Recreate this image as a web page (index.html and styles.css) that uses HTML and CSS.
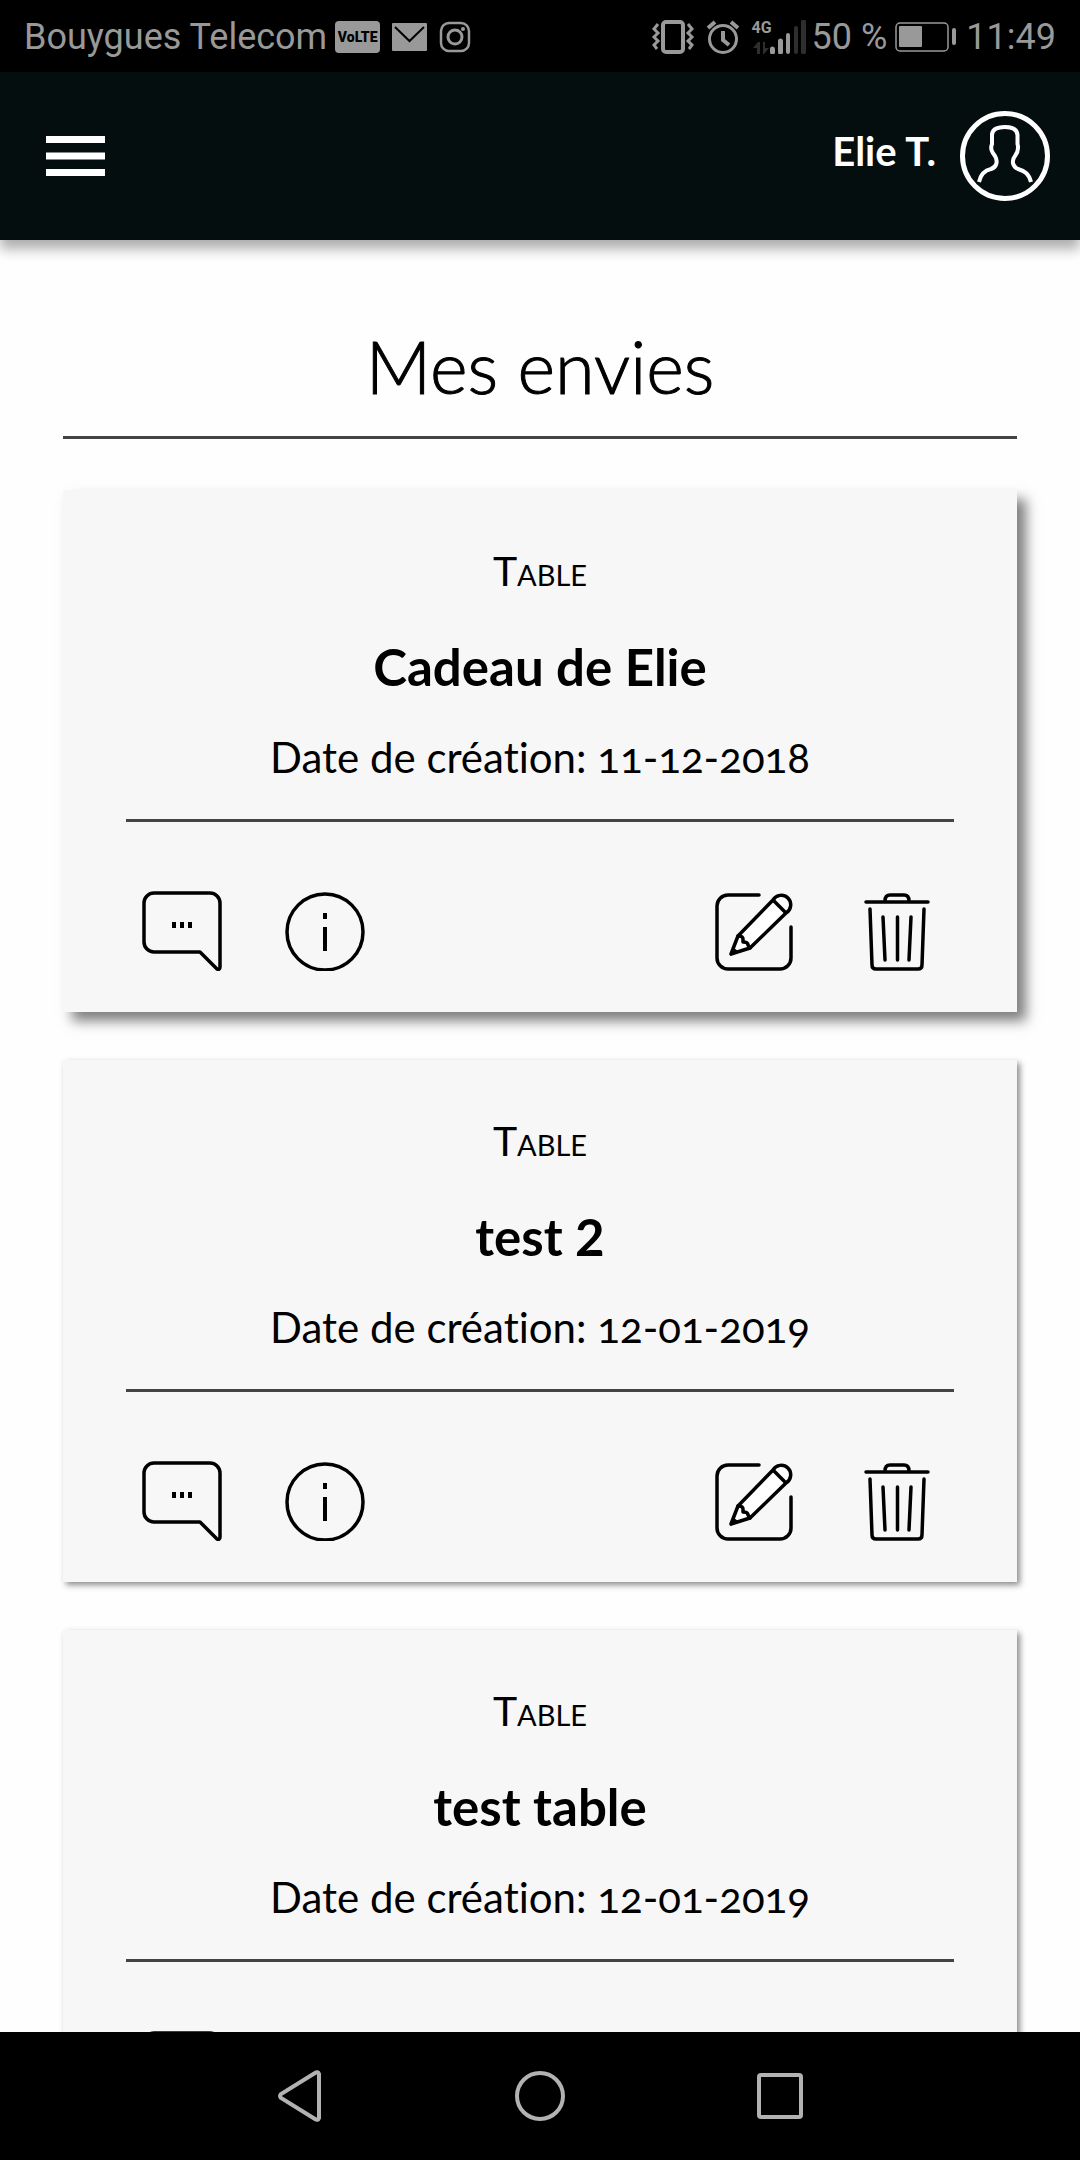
FILE: index.html
```html
<!DOCTYPE html>
<html lang="fr">
<head>
<meta charset="utf-8">
<meta name="viewport" content="width=device-width, initial-scale=1">
<title>Mes envies</title>
<link rel="stylesheet" href="styles.css">
</head>
<body>
<svg class="defs" width="0" height="0" aria-hidden="true">
  <symbol id="chat" viewBox="0 0 80 80">
    <path class="line" d="M12 2H68a10 10 0 0 1 10 10V76q0 3-3 2L58 61H12A10 10 0 0 1 2 51V12A10 10 0 0 1 12 2Z"/>
    <path d="M30 31h4v6h-4zM38 31h4v6h-4zM46 31h4v6h-4z"/>
  </symbol>
  <symbol id="info" viewBox="0 0 80 80">
    <circle class="line" cx="40" cy="41" r="38"/>
    <path d="M38 22h4v6h-4zM38 36h4v24h-4z"/>
  </symbol>
  <symbol id="edit" viewBox="0 0 80 80">
    <path class="line" d="M45 4H14A11 11 0 0 0 3 15V67A11 11 0 0 0 14 78H66A11 11 0 0 0 77 67V36"/>
    <path class="line pencil" d="M59 9 24 45 17 63 36 57 72 22A9.5 9.5 0 1 0 59 9L72 22"/>
    <path class="line" d="M24 45q5 0 5 3v3q5 0 5 3l2 3"/>
    <path d="M19 56l6 5-9 4z"/>
  </symbol>
  <symbol id="trash" viewBox="0 0 80 80">
    <path class="line" d="M9 11H71M28 10q0-6 5-6H47q5 0 5 6M13 18 15 74q0 4 4 4H61q4 0 4-4L67 18M26 26 28 69M40.500 26V69M54 26 52 69"/>
  </symbol>
</svg>

<div class="screen">
  <div class="status">
    <div class="status-group">
      <span>Bouygues Telecom</span>
      <span class="volte">VoLTE</span>
      <svg class="mail" viewBox="0 0 35 28" width="35" height="28"><rect width="35" height="28" rx="1" fill="#999"/><path d="M3 4 17.500 18 32 4" fill="none" stroke="#000" stroke-width="2"/></svg>
      <svg class="insta" viewBox="0 0 32 32" width="32" height="32" fill="none" stroke="#999"><rect x="2" y="2" width="28" height="28" rx="8" stroke-width="2.500"/><circle cx="16" cy="16" r="7" stroke-width="3"/><circle cx="24" cy="8" r="2" fill="#999" stroke="none"/></svg>
    </div>
    <div class="status-group">
      <svg class="vibrate" viewBox="0 0 44 34" width="44" height="34" fill="none" stroke="#999" stroke-width="3"><rect x="12" y="2" width="20" height="30" rx="3" stroke-width="4"/><path d="M7 4 3 9l4 4-4 4 4 4-4 4 3 4M37 4l4 5-4 4 4 4-4 4 4 4-3 4"/></svg>
      <svg class="alarm" viewBox="0 0 34 34" width="34" height="34" fill="none" stroke="#999" stroke-width="3"><circle cx="17" cy="19" r="13.500"/><path d="M17 11v9l6 5" stroke-width="4"/><path d="M2 8 9 2M32 8 25 2" stroke-width="4"/></svg>
      <div class="signal">
        <span class="network">4G</span>
        <svg viewBox="0 0 54 34" width="54" height="34"><path fill="#2e2e2e" d="M1 28l5-6h2v12H5v-6zM11 22h2v6h4l-5 6h-1zM42 8a2 2 0 0 1 4 0V32a2 2 0 0 1-4 0zM49 2a2 2 0 0 1 5 0V32a2 2 0 0 1-5 0z"/><path fill="#999" d="M18 29a2 2 0 0 1 5 0v3a2 2 0 0 1-5 0zM26 21a2 2 0 0 1 5 0V32a2 2 0 0 1-5 0zM34 15a2 2 0 0 1 4 0V32a2 2 0 0 1-4 0z"/></svg>
      </div>
      <span>50 %</span>
      <svg class="battery" viewBox="0 0 62 30" width="62" height="30"><rect x="1" y="1" width="52" height="28" rx="4" fill="none" stroke="#999" stroke-width="1.500"/><rect x="4" y="4" width="23" height="21" rx="1" fill="#999"/><rect x="57" y="6" width="4" height="17" rx="2" fill="#999"/></svg>
      <span>11:49</span>
    </div>
  </div>

  <header class="topbar">
    <button class="icon-button menu" aria-label="Menu"><svg viewBox="0 0 60 40" width="60" height="40" fill="#fff"><path d="M0 0H59V7H0zM0 16.500H59V23.500H0zM0 33H59V40H0z"/></svg></button>
    <a class="user" href="#profil">
      <span class="user-name">Elie T.</span>
      <svg viewBox="0 0 90 90" width="90" height="90" fill="none" stroke="#fff" stroke-width="4"><circle cx="45" cy="45" r="42.500" stroke-width="5"/><path d="M19 71C21 62 26 59 31 58 37 56 38 50 35 45 32 41 30 38 32 33V24C32 18 38 16 45 16S57 18 57.500 24V33C59 38 58 41 55 45 51 50 53 56 58 58 65 60 69 63 71 71"/></svg>
    </a>
  </header>

  <main class="content">
    <h1 class="page-title">Mes envies</h1>

    <article class="card raised">
      <p class="kind">Table</p>
      <h2 class="name">Cadeau de Elie</h2>
      <p class="date">Date de création: 11-12-2018</p>
      <div class="actions">
        <button class="icon-button" aria-label="Commentaires"><svg class="icon"><use href="#chat"/></svg></button>
        <button class="icon-button" aria-label="Informations"><svg class="icon"><use href="#info"/></svg></button>
        <button class="icon-button push" aria-label="Modifier"><svg class="icon"><use href="#edit"/></svg></button>
        <button class="icon-button" aria-label="Supprimer"><svg class="icon"><use href="#trash"/></svg></button>
      </div>
    </article>

    <article class="card">
      <p class="kind">Table</p>
      <h2 class="name">test 2</h2>
      <p class="date">Date de création: 12-01-2019</p>
      <div class="actions">
        <button class="icon-button" aria-label="Commentaires"><svg class="icon"><use href="#chat"/></svg></button>
        <button class="icon-button" aria-label="Informations"><svg class="icon"><use href="#info"/></svg></button>
        <button class="icon-button push" aria-label="Modifier"><svg class="icon"><use href="#edit"/></svg></button>
        <button class="icon-button" aria-label="Supprimer"><svg class="icon"><use href="#trash"/></svg></button>
      </div>
    </article>

    <article class="card">
      <p class="kind">Table</p>
      <h2 class="name">test table</h2>
      <p class="date">Date de création: 12-01-2019</p>
      <div class="actions">
        <button class="icon-button" aria-label="Commentaires"><svg class="icon"><use href="#chat"/></svg></button>
        <button class="icon-button" aria-label="Informations"><svg class="icon"><use href="#info"/></svg></button>
        <button class="icon-button push" aria-label="Modifier"><svg class="icon"><use href="#edit"/></svg></button>
        <button class="icon-button" aria-label="Supprimer"><svg class="icon"><use href="#trash"/></svg></button>
      </div>
    </article>
  </main>

  <nav class="system-nav" aria-label="Système">
    <button class="icon-button" aria-label="Retour"><svg viewBox="0 0 52 52" width="52" height="52"><path d="M45 4V48q-1 3-4 1L7 28q-2-2 0-4L41 3q3-2 4 1Z"/></svg></button>
    <button class="icon-button" aria-label="Accueil"><svg viewBox="0 0 52 52" width="52" height="52"><circle cx="26" cy="26" r="23"/></svg></button>
    <button class="icon-button" aria-label="Applications récentes"><svg viewBox="0 0 52 52" width="52" height="52"><rect x="5" y="5" width="42" height="42" rx="2"/></svg></button>
  </nav>
</div>
</body>
</html>
```
FILE: styles.css
```css
* { box-sizing: border-box; }

body {
  margin: 0;
  background: #fefefe;
  color: #000;
  font-family: Lato, sans-serif;
  font-variant-ligatures: none;
}

.defs { position: absolute; }

.screen {
  display: flex;
  flex-direction: column;
  height: 100vh;
}

.status {
  display: flex;
  flex: none;
  align-items: center;
  justify-content: space-between;
  height: 72px;
  padding: 2px 24px 0;
  background: #000;
  color: #999;
  font: 36px/70px Roboto, sans-serif;
  white-space: nowrap;
}

.status-group {
  display: flex;
  align-items: center;
}

.volte {
  width: 45px;
  height: 32px;
  margin: 0 12px 0 8px;
  border-radius: 4px;
  background: #999;
  color: #000;
  font: 900 14px/32px Roboto, sans-serif;
  text-align: center;
}

.insta { margin-left: 12px; }
.alarm { margin: 0 12px 0 11px; }

.signal { position: relative; margin-right: 6px; height: 34px; }
.signal svg { display: block; }
.network {
  position: absolute;
  top: 0;
  left: 0;
  font: bold 16px/16px Roboto, sans-serif;
}

.battery { margin: 0 9px 0 8px; }

.topbar {
  position: relative;
  z-index: 1;
  display: flex;
  flex: none;
  align-items: center;
  justify-content: space-between;
  height: 168px;
  padding: 0 30px 0 46px;
  background: #050e0f;
  box-shadow: 0 9px 12px rgba(0, 0, 0, .32);
}

.icon-button {
  display: block;
  padding: 0;
  border: 0;
  background: none;
  cursor: pointer;
}
.icon-button svg { display: block; }

.user {
  display: flex;
  gap: 24px;
  color: #fff;
  text-decoration: none;
}
.user-name {
  font: bold 40px/80px Lato, sans-serif;
}

.content {
  flex: 1;
  min-height: 0;
  padding: 0 63px;
  overflow: hidden;
  text-align: center;
}

.page-title {
  margin: 0 0 51px;
  padding: 86px 0 30px;
  border-bottom: 3px solid #444;
  font-size: 72px;
  font-weight: 300;
  line-height: 80px;
  -webkit-text-stroke: 1px #000;
}

.card {
  margin-bottom: 48px;
  padding: 51px 63px 41px;
  background: #f7f7f7;
  box-shadow: 3px 3px 6px rgba(0, 0, 0, .45);
}
.card.raised { box-shadow: 9px 9px 12px rgba(0, 0, 0, .5); }

.kind, .name, .date { margin: 0; }

.kind {
  font-size: 41px;
  font-weight: 400;
  font-variant-caps: small-caps;
  line-height: 60px;
}
.name {
  margin-top: 36px;
  font-size: 51px;
  font-weight: 700;
  line-height: 60px;
}
.date {
  margin-top: 30px;
  padding-bottom: 32px;
  border-bottom: 3px solid #444;
  font-size: 42px;
  font-variant-numeric: oldstyle-nums;
  line-height: 60px;
}

.actions {
  display: flex;
  gap: 63px;
  padding: 69px 17px 0 16px;
}
.push { margin-left: auto; }

.icon { width: 80px; height: 80px; }
.line {
  fill: none;
  stroke: #000;
  stroke-width: 3.5;
  stroke-linecap: round;
  stroke-linejoin: round;
}
.pencil { fill: #fff; }

.system-nav {
  display: flex;
  flex: none;
  align-items: center;
  justify-content: center;
  gap: 188px;
  height: 128px;
  background: #000;
}
.system-nav svg {
  fill: none;
  stroke: #b2b2b2;
  stroke-width: 4;
}
```
